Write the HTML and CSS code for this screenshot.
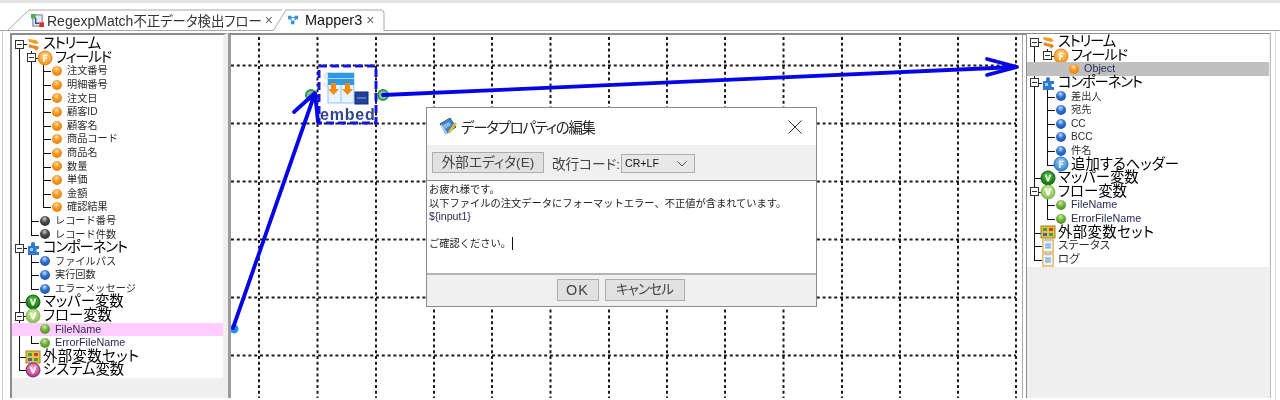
FILE: index.html
```html
<!DOCTYPE html>
<html lang="ja">
<head>
<meta charset="utf-8">
<title>Mapper3</title>
<link rel="stylesheet" href="styles.css">
</head>
<body>
<svg class="defs" width="0" height="0" aria-hidden="true">
  <defs>
    <radialGradient id="g-orange" cx="45%" cy="30%" r="75%"><stop offset="0" stop-color="#ffe0b0"/><stop offset=".45" stop-color="#f79a24"/><stop offset="1" stop-color="#e87a00"/></radialGradient>
    <radialGradient id="g-blue" cx="45%" cy="30%" r="75%"><stop offset="0" stop-color="#c4dcf8"/><stop offset=".45" stop-color="#2f72cc"/><stop offset="1" stop-color="#1a4fa8"/></radialGradient>
    <radialGradient id="g-dark" cx="45%" cy="30%" r="75%"><stop offset="0" stop-color="#cfcfcf"/><stop offset=".45" stop-color="#4a4a4a"/><stop offset="1" stop-color="#2a2a2a"/></radialGradient>
    <radialGradient id="g-green" cx="45%" cy="30%" r="75%"><stop offset="0" stop-color="#cfe8b0"/><stop offset=".5" stop-color="#6fae38"/><stop offset="1" stop-color="#4c8c20"/></radialGradient>
    <radialGradient id="g-dgreen" cx="50%" cy="35%" r="70%"><stop offset="0" stop-color="#58c048"/><stop offset="1" stop-color="#0c6410"/></radialGradient>
    <radialGradient id="g-lgreen" cx="50%" cy="35%" r="70%"><stop offset="0" stop-color="#d8f0a8"/><stop offset="1" stop-color="#78b848"/></radialGradient>
    <radialGradient id="g-purple" cx="50%" cy="35%" r="70%"><stop offset="0" stop-color="#f0b0d8"/><stop offset="1" stop-color="#a02878"/></radialGradient>
    <radialGradient id="g-bigorange" cx="50%" cy="35%" r="70%"><stop offset="0" stop-color="#ffd890"/><stop offset="1" stop-color="#f08a10"/></radialGradient>
    <radialGradient id="g-bigblue" cx="50%" cy="35%" r="70%"><stop offset="0" stop-color="#a8d0f4"/><stop offset="1" stop-color="#2878c8"/></radialGradient>

    <symbol id="i-orange" viewBox="0 0 12 12"><circle cx="6" cy="6" r="5" fill="url(#g-orange)"/></symbol>
    <symbol id="i-blue" viewBox="0 0 12 12"><circle cx="6" cy="6" r="5" fill="url(#g-blue)"/></symbol>
    <symbol id="i-dark" viewBox="0 0 12 12"><circle cx="6" cy="6" r="5" fill="url(#g-dark)"/></symbol>
    <symbol id="i-green" viewBox="0 0 12 12"><circle cx="6" cy="6" r="5" fill="url(#g-green)"/></symbol>

    <symbol id="i-stream" viewBox="0 0 16 16"><path d="M3 3l8 1 3 3-3 1-7-2z" fill="#f0a020"/><path d="M5 9l7 1 2 2-3 3-1-2-7-2z" fill="#e8861a"/><path d="M3 8l4 1-2 1z" fill="#8a8a8a"/></symbol>
    <symbol id="i-field" viewBox="0 0 16 16"><circle cx="8" cy="8" r="7" fill="url(#g-bigorange)" stroke="#e8800c"/><path d="M6 4.500h4.500v1.600H7.800v1.300h2.200V9H7.800v3H6z" fill="#fff3d8"/></symbol>
    <symbol id="i-puzzle" viewBox="0 0 16 16"><path d="M3 6h3V4a2 2 0 0 1 4 0v2h4v3h-2a2 2 0 0 0 0 3h2v3H3z" fill="#2f7ad0"/><path d="M5 8h3v3H5z" fill="#9cc8f0"/></symbol>
    <symbol id="i-mapper" viewBox="0 0 16 16"><circle cx="8" cy="8" r="7" fill="url(#g-dgreen)" stroke="#0c5c10"/><path d="M4.500 4.500h2.200L8 8.500l1.300-4h2.200L9 11.500H7z" fill="#d8f4c8"/></symbol>
    <symbol id="i-flow" viewBox="0 0 16 16"><circle cx="8" cy="8" r="7" fill="url(#g-lgreen)" stroke="#80b850"/><path d="M4.500 4.500h2.200L8 8.500l1.300-4h2.200L9 11.500H7z" fill="#fff"/></symbol>
    <symbol id="i-system" viewBox="0 0 16 16"><circle cx="8" cy="8" r="7" fill="url(#g-purple)" stroke="#90206c"/><path d="M4.500 4.500h2.200L8 8.500l1.300-4h2.200L9 11.500H7z" fill="#fde8f4"/></symbol>
    <symbol id="i-header" viewBox="0 0 16 16"><circle cx="8" cy="8" r="7" fill="url(#g-bigblue)" stroke="#2a70c0"/><path d="M6 4.500h4.500v1.600H7.800v1.300h2.200V9H7.800v3H6z" fill="#d8ecfc"/></symbol>
    <symbol id="i-extset" viewBox="0 0 16 16"><rect x="1" y="2" width="14" height="12" fill="#e8c040" stroke="#a08020"/><rect x="3" y="4" width="4" height="3" fill="#40a040"/><rect x="9" y="4" width="4" height="3" fill="#c04040"/><rect x="3" y="9" width="4" height="3" fill="#4060c0"/><rect x="9" y="9" width="4" height="3" fill="#40a040"/></symbol>
    <symbol id="i-clip" viewBox="0 0 16 16"><rect x="2.500" y="2" width="11" height="13" fill="#eef4f8" stroke="#e0b050" stroke-width="1.400"/><rect x="5.500" y="1" width="5" height="2.600" fill="#b8c4d0"/><path d="M5 6.500h6M5 8.500h6M5 10.500h6" stroke="#4a90d0"/></symbol>
  </defs>
</svg>

<div class="app">
  <div class="topstrip"></div>
  <div class="tabbar">
    <svg class="tabshape" viewBox="0 0 1280 22" aria-hidden="true">
      <path d="M8 21L29 1H282" fill="none" stroke="#a8a8a8"/>
      <path d="M273 22L286 1H381q3 0 3 3V22" fill="#fff" stroke="#a8a8a8"/>
    </svg>
    <div class="tab tab-first">
      <svg class="tabicon" viewBox="0 0 14 14" aria-hidden="true"><rect x="2" y="1" width="10" height="12" fill="#e8e8f0" stroke="#707080"/><rect x="0" y="0" width="5" height="5" fill="#50b050"/><rect x="9" y="9" width="5" height="5" fill="#d83030"/><path d="M5 4v6h4" fill="none" stroke="#3050a0" stroke-width="1.500"/></svg>
      <span class="tablabel">RegexpMatch<span class="tabcjk">不正データ検出フロー</span></span>
      <span class="tabclose">×</span>
    </div>
    <div class="tab tab-second">
      <svg class="tabicon" viewBox="0 0 14 14" aria-hidden="true"><rect x="0" y="1" width="5" height="5" fill="#2f9ad8"/><rect x="9" y="1" width="5" height="5" fill="#2f9ad8"/><rect x="4" y="8" width="5" height="5" fill="#2f9ad8"/><path d="M5 3.500h4M3 6l3 2M11 6l-3 2" stroke="#2060a0"/></svg>
      <span class="tablabel">Mapper3</span>
      <span class="tabclose">×</span>
    </div>
  </div>

  <div class="main">
    <div class="pane pane-left">
      <ul class="tree">
        <li><div class="row big tight"><i class="toggle"></i><svg class="ic"><use href="#i-stream"/></svg><span>ストリーム</span></div>
          <ul>
            <li><div class="row big tight"><i class="toggle"></i><svg class="ic"><use href="#i-field"/></svg><span>フィールド</span></div>
              <ul>
                <li><div class="row"><svg class="ic"><use href="#i-orange"/></svg><span>注文番号</span></div></li>
                <li><div class="row"><svg class="ic"><use href="#i-orange"/></svg><span>明細番号</span></div></li>
                <li><div class="row"><svg class="ic"><use href="#i-orange"/></svg><span>注文日</span></div></li>
                <li><div class="row"><svg class="ic"><use href="#i-orange"/></svg><span>顧客ID</span></div></li>
                <li><div class="row"><svg class="ic"><use href="#i-orange"/></svg><span>顧客名</span></div></li>
                <li><div class="row"><svg class="ic"><use href="#i-orange"/></svg><span>商品コード</span></div></li>
                <li><div class="row"><svg class="ic"><use href="#i-orange"/></svg><span>商品名</span></div></li>
                <li><div class="row"><svg class="ic"><use href="#i-orange"/></svg><span>数量</span></div></li>
                <li><div class="row"><svg class="ic"><use href="#i-orange"/></svg><span>単価</span></div></li>
                <li><div class="row"><svg class="ic"><use href="#i-orange"/></svg><span>金額</span></div></li>
                <li><div class="row"><svg class="ic"><use href="#i-orange"/></svg><span>確認結果</span></div></li>
              </ul>
            </li>
            <li><div class="row"><svg class="ic"><use href="#i-dark"/></svg><span>レコード番号</span></div></li>
            <li><div class="row"><svg class="ic"><use href="#i-dark"/></svg><span>レコード件数</span></div></li>
          </ul>
        </li>
        <li><div class="row big tight"><i class="toggle"></i><svg class="ic"><use href="#i-puzzle"/></svg><span>コンポーネント</span></div>
          <ul>
            <li><div class="row"><svg class="ic"><use href="#i-blue"/></svg><span>ファイルパス</span></div></li>
            <li><div class="row"><svg class="ic"><use href="#i-blue"/></svg><span>実行回数</span></div></li>
            <li><div class="row"><svg class="ic"><use href="#i-blue"/></svg><span>エラーメッセージ</span></div></li>
          </ul>
        </li>
        <li><div class="row big"><svg class="ic"><use href="#i-mapper"/></svg><span>マッパー変数</span></div></li>
        <li><div class="row big"><i class="toggle"></i><svg class="ic"><use href="#i-flow"/></svg><span>フロー変数</span></div>
          <ul>
            <li><div class="row sel-pink latin"><svg class="ic"><use href="#i-green"/></svg><span>FileName</span></div></li>
            <li><div class="row latin"><svg class="ic"><use href="#i-green"/></svg><span>ErrorFileName</span></div></li>
          </ul>
        </li>
        <li><div class="row big wide"><svg class="ic"><use href="#i-extset"/></svg><span>外部変数セット</span></div></li>
        <li><div class="row big"><svg class="ic"><use href="#i-system"/></svg><span>システム変数</span></div></li>
      </ul>
    </div>

    <div class="canvas">
      <svg class="diagram" viewBox="231 37 790 361" aria-hidden="true">
        <g class="grid">
          <path d="M259 37V398M317.500 37V398M376 37V398M434 37V398M492 37V398M550.500 37V398M609 37V398M667 37V398M725 37V398M783.500 37V398M842 37V398M900 37V398M958 37V398M1016 37V398"/>
          <path d="M231 65.500H1016M231 123.500H1016M231 181.500H1016M231 239.500H1016M231 297.500H1016M231 355.500H1016"/>
        </g>
        <text x="322" y="87" class="ghost">St</text>
        <rect x="328" y="73" width="26" height="30" fill="#e8f4ff" stroke="#90c8f0"/>
        <path d="M341 73V103" stroke="#90c8f0"/>
        <rect x="328" y="73" width="13" height="12" fill="#2f9ae0"/>
        <rect x="341" y="73" width="13" height="12" fill="#2f9ae0"/>
        <path d="M328 78.500H354" stroke="#a8d8f8"/>
        <path d="M331 83h5v6h3l-5.500 6-5.500-6h3z" fill="#f58a10"/>
        <path d="M345 83h5v6h3l-5.500 6-5.500-6h3z" fill="#f58a10"/>
        <rect x="355" y="92" width="13" height="12" fill="#20409c" stroke="#102880"/>
        <path d="M357 98h9" stroke="#90b0e0"/>
        <text x="320" y="120" class="embed">embed</text>
        <rect x="319" y="66" width="57" height="57" class="select"/>
        <circle cx="311" cy="95" r="5" fill="#88c080" stroke="#2a9a60" stroke-width="2"/>
        <circle cx="383" cy="95" r="5" fill="#88c080" stroke="#2a9a60" stroke-width="2"/>
        <circle cx="234" cy="329" r="4.500" fill="#2090f0"/>
        <path d="M233 328L314 96" class="wire"/>
        <path d="M294 112L315 93L318 122" class="wire"/>
        <path d="M383 95L1016 67" class="wire"/>
        <path d="M987 59L1017 67L987 75" class="wire"/>
      </svg>

      <div class="dialog">
        <div class="dlg-title">
          <svg class="dlg-icon" viewBox="0 0 20 20" aria-hidden="true"><path d="M2 7L12 1l6 9-10 7z" fill="#3f82c8" stroke="#2a5c98"/><path d="M5 8l6-3 2 3-6 4z" fill="#8ab8e8"/><path d="M10 15L17 5l2 1.500-7 10z" fill="#e8c030"/><path d="M3 8l6 9" stroke="#d0dcec" stroke-width="1.500"/></svg>
          <span class="dlg-name">データプロパティの編集</span>
          <svg class="dlg-x" viewBox="0 0 14 14" aria-hidden="true"><path d="M.5.5l13 13M13.500.5l-13 13" stroke="#333" fill="none"/></svg>
        </div>
        <div class="dlg-tools">
          <button class="btn btn-ext" type="button">外部エディタ(E)</button>
          <span class="dlg-lbl">改行コード:</span>
          <span class="select-box">CR+LF<svg class="chev" viewBox="0 0 10 6" aria-hidden="true"><path d="M.5.500l4.500 4.500L9.500.5" fill="none" stroke="#555"/></svg></span>
        </div>
        <div class="dlg-body">
          <p>お疲れ様です。</p>
          <p>以下ファイルの注文データにフォーマットエラー、不正値が含まれています。</p>
          <p class="var">${input1}</p>
          <p>&nbsp;</p>
          <p>ご確認ください。<span class="caret"></span></p>
        </div>
        <div class="dlg-foot">
          <button class="btn btn-ok" type="button">OK</button>
          <button class="btn btn-cancel" type="button">キャンセル</button>
        </div>
      </div>
    </div>

    <div class="pane pane-right">
      <ul class="tree">
        <li><div class="row big tight"><i class="toggle"></i><svg class="ic"><use href="#i-stream"/></svg><span>ストリーム</span></div>
          <ul>
            <li><div class="row big tight"><i class="toggle"></i><svg class="ic"><use href="#i-field"/></svg><span>フィールド</span></div>
              <ul>
                <li><div class="row sel-gray latin"><svg class="ic"><use href="#i-orange"/></svg><span>Object</span></div></li>
              </ul>
            </li>
          </ul>
        </li>
        <li><div class="row big tight"><i class="toggle"></i><svg class="ic"><use href="#i-puzzle"/></svg><span>コンポーネント</span></div>
          <ul>
            <li><div class="row"><svg class="ic"><use href="#i-blue"/></svg><span>差出人</span></div></li>
            <li><div class="row"><svg class="ic"><use href="#i-blue"/></svg><span>宛先</span></div></li>
            <li><div class="row"><svg class="ic"><use href="#i-blue"/></svg><span>CC</span></div></li>
            <li><div class="row"><svg class="ic"><use href="#i-blue"/></svg><span>BCC</span></div></li>
            <li><div class="row"><svg class="ic"><use href="#i-blue"/></svg><span>件名</span></div></li>
            <li><div class="row big"><svg class="ic"><use href="#i-header"/></svg><span>追加するヘッダー</span></div></li>
          </ul>
        </li>
        <li><div class="row big"><svg class="ic"><use href="#i-mapper"/></svg><span>マッパー変数</span></div></li>
        <li><div class="row big"><i class="toggle"></i><svg class="ic"><use href="#i-flow"/></svg><span>フロー変数</span></div>
          <ul>
            <li><div class="row latin"><svg class="ic"><use href="#i-green"/></svg><span>FileName</span></div></li>
            <li><div class="row latin"><svg class="ic"><use href="#i-green"/></svg><span>ErrorFileName</span></div></li>
          </ul>
        </li>
        <li><div class="row big wide"><svg class="ic"><use href="#i-extset"/></svg><span>外部変数セット</span></div></li>
        <li><div class="row mid"><svg class="ic"><use href="#i-clip"/></svg><span>ステータス</span></div></li>
        <li><div class="row mid"><svg class="ic"><use href="#i-clip"/></svg><span>ログ</span></div></li>
      </ul>
    </div>
  </div>
</div>
</body>
</html>
```
FILE: styles.css
```css
* { box-sizing: border-box; }
html, body { margin: 0; padding: 0; background: #fff; }
body { width: 1280px; height: 400px; overflow: hidden; }
.defs { position: absolute; }

.app {
  width: 1280px;
  height: 400px;
  display: flex;
  flex-direction: column;
  font-family: "Liberation Sans", "Noto Sans CJK JP", sans-serif;
  color: #111;
  filter: blur(.35px);
}

.topstrip { height: 10px; border-top: 3px solid #e4e4e4; flex: none; background: #fff; }

.tabbar {
  position: relative;
  height: 21px;
  flex: none;
  display: flex;
  border-bottom: 1px solid #a8a8a8;
  background: #fff;
  font-feature-settings: "palt";
}
.tabshape { position: absolute; left: 0; top: -1px; width: 1280px; height: 22px; }
.tab { position: relative; display: flex; align-items: center; height: 20px; }
.tab-first { margin-left: 31px; width: 257px; }
.tab-second { width: 96px; }
.tabicon { width: 13px; height: 13px; flex: none; margin-right: 3px; }
.tab-second .tabicon { width: 10px; height: 10px; margin-right: 7px; }
.tablabel { font-size: 14px; color: #333; white-space: nowrap; }
.tab-second .tablabel { color: #111; font-size: 14.5px; }
.tabcjk { font-size: 13.4px; }
.tabclose { margin-left: 4px; font-size: 14px; color: #666; line-height: 1; }
.tab-first .tabclose { margin-left: 3px; }

.main {
  flex: 1;
  display: flex;
  min-height: 0;
  margin: 0 4px 0 2px;
  padding: 2px 0;
  background: #fff;
  border-left: 1px solid #ccc;
  border-right: 1px solid #ddd;
}

.pane { background: #efefef; overflow: hidden; flex: none; }
.pane-left {
  width: 218px;
  margin-left: 7px;
  border-left: 2px solid #8c8c8c;
  border-top: 2px solid #8c8c8c;
  border-right: 5px solid #efefef;
}
.pane-right {
  width: 244px;
  border-top: 1px solid #8c8c8c;
  border-right: 1px solid #bdbdbd;
}

.canvas {
  position: relative;
  width: 799px;
  flex: none;
  border-left: 3px solid #9c9c9c;
  border-right: 1px solid #8c8c8c;
  border-top: 2px solid #8c8c8c;
  background: #fff;
  padding-top: 2px;
  box-shadow: inset -3px 0 0 #fff, inset -4px 0 0 #a8a8a8;
}
.diagram { display: block; width: 790px; height: 361px; }
.grid path { fill: none; stroke: #1c1c1c; stroke-width: 2; stroke-dasharray: 3 2.8; }
.wire { fill: none; stroke: #0505e6; stroke-width: 3.8; stroke-linecap: round; stroke-linejoin: round; }
.select { fill: none; stroke: #1515e0; stroke-width: 3; stroke-dasharray: 8 4; }
.ghost { font: bold 22px "Liberation Sans", sans-serif; fill: #e4e7f6; }
.embed { font: bold 16px "Liberation Sans", sans-serif; fill: #30448c; letter-spacing: .8px; }

/* tree */
.tree, .tree ul { list-style: none; margin: 0; padding: 0; }
.tree { background: #fff; position: relative; padding-bottom: 1px; }
.pane-left .tree { padding-top: 2.2px; --step: 12px; }
.pane-right .tree { padding-top: 1.2px; --step: 13px; margin-right: 1px; }
.tree ul { margin-left: var(--step); }
.tree li { position: relative; }
.tree li::after {
  content: "";
  position: absolute;
  left: 7px;
  top: 0;
  bottom: 0;
  border-left: 1px solid #111;
  z-index: 1;
}
.tree li:last-child::after { bottom: auto; height: 7px; }
.tree > li:first-child::after { top: 7px; }
.tree li::before {
  content: "";
  position: absolute;
  left: 7px;
  top: 7px;
  width: 8px;
  border-top: 1px solid #111;
  z-index: 1;
}

.row {
  position: relative;
  display: flex;
  align-items: center;
  height: 13.6px;
  line-height: 13.6px;
  padding-left: 13px;
  font-size: 10.2px;
  color: #2c2c2c;
  white-space: nowrap;
}
.ic { width: 16px; height: 12px; flex: none; margin-right: 2px; position: relative; z-index: 2; }
.row span { position: relative; z-index: 2; }
.big { font-size: 14.4px; color: #000; font-feature-settings: "palt"; }
.big .ic { height: 16px; width: 16px; }
.tight { letter-spacing: -1.2px; }
.wide { letter-spacing: .4px; }
.mid { font-size: 11.4px; font-feature-settings: "palt"; }
.mid .ic { height: 15px; }
.latin { font-size: 10.8px; color: #2b2b55; }

.toggle {
  position: absolute;
  left: 3px;
  top: 2.5px;
  width: 9px;
  height: 9px;
  background: #fff;
  border: 1px solid #333;
  z-index: 3;
}
.toggle::after {
  content: "";
  position: absolute;
  left: 1px;
  top: 3px;
  width: 5px;
  border-top: 1px solid #333;
}

.sel-pink::before, .sel-gray::before {
  content: "";
  position: absolute;
  top: 0;
  bottom: 0;
  z-index: 1;
}
.sel-pink::before { left: -24px; right: 0; background: #ffccff; }
.sel-gray::before { left: -40px; right: 0; background: #c0c0c0; }
.sel-pink, .sel-gray { z-index: 2; }

/* dialog */
.dialog {
  position: absolute;
  left: 195px;
  top: 72px;
  width: 391px;
  height: 200px;
  background: #fff;
  border: 1px solid #8a8a8a;
  display: flex;
  flex-direction: column;
}
.dlg-title { height: 37px; flex: none; display: flex; align-items: center; padding: 0 14px 0 11px; background: #fff; }
.dlg-icon { width: 20px; height: 20px; flex: none; margin-right: 3px; }
.dlg-name { font-size: 14.4px; color: #222; font-feature-settings: "palt"; letter-spacing: -1.2px; }
.dlg-x { width: 14px; height: 14px; margin-left: auto; }
.dlg-tools { height: 36px; flex: none; display: flex; align-items: center; padding: 0 0 0 5px; background: #f0f0f0; border-bottom: 1px solid #8a8a8a; font-feature-settings: "palt"; }
.btn {
  font: inherit;
  font-feature-settings: "palt";
  background: #e1e1e1;
  border: 1px solid #adadad;
  color: #444;
  padding: 0;
  text-align: center;
}
.btn-ext { width: 112px; height: 21px; font-size: 13.6px; line-height: 19px; }
.dlg-lbl { font-size: 13.6px; color: #444; margin-left: 8px; width: 69px; white-space: nowrap; }
.select-box {
  position: relative;
  width: 74px;
  height: 19px;
  margin-top: 1px;
  background: #e8e8e8;
  border: 1px solid #adadad;
  font-size: 10.6px;
  line-height: 17px;
  padding-left: 3px;
  color: #111;
}
.chev { position: absolute; right: 7px; top: 6px; width: 10px; height: 6px; }
.dlg-body { flex: 1; padding: 2px 0 0 2px; background: #fff; font-size: 10.25px; line-height: 13.6px; color: #222; }
.dlg-body p { margin: 0; }
.var { color: #2b2b55; font-size: 10.6px; }
.caret { display: inline-block; width: 1px; height: 13px; background: #111; margin-left: 1px; vertical-align: -3px; }
.dlg-foot {
  height: 33px;
  flex: none;
  display: flex;
  justify-content: center;
  align-items: flex-start;
  gap: 6px;
  padding: 4px 2px 0 0;
  background: #f0f0f0;
  border-top: 2px solid #b4b4b4;
}
.btn-ok { width: 42px; height: 22px; font-size: 14.4px; line-height: 20px; letter-spacing: 1px; }
.btn-cancel { width: 80px; height: 22px; font-size: 13.6px; line-height: 20px; letter-spacing: -.9px; }
```
